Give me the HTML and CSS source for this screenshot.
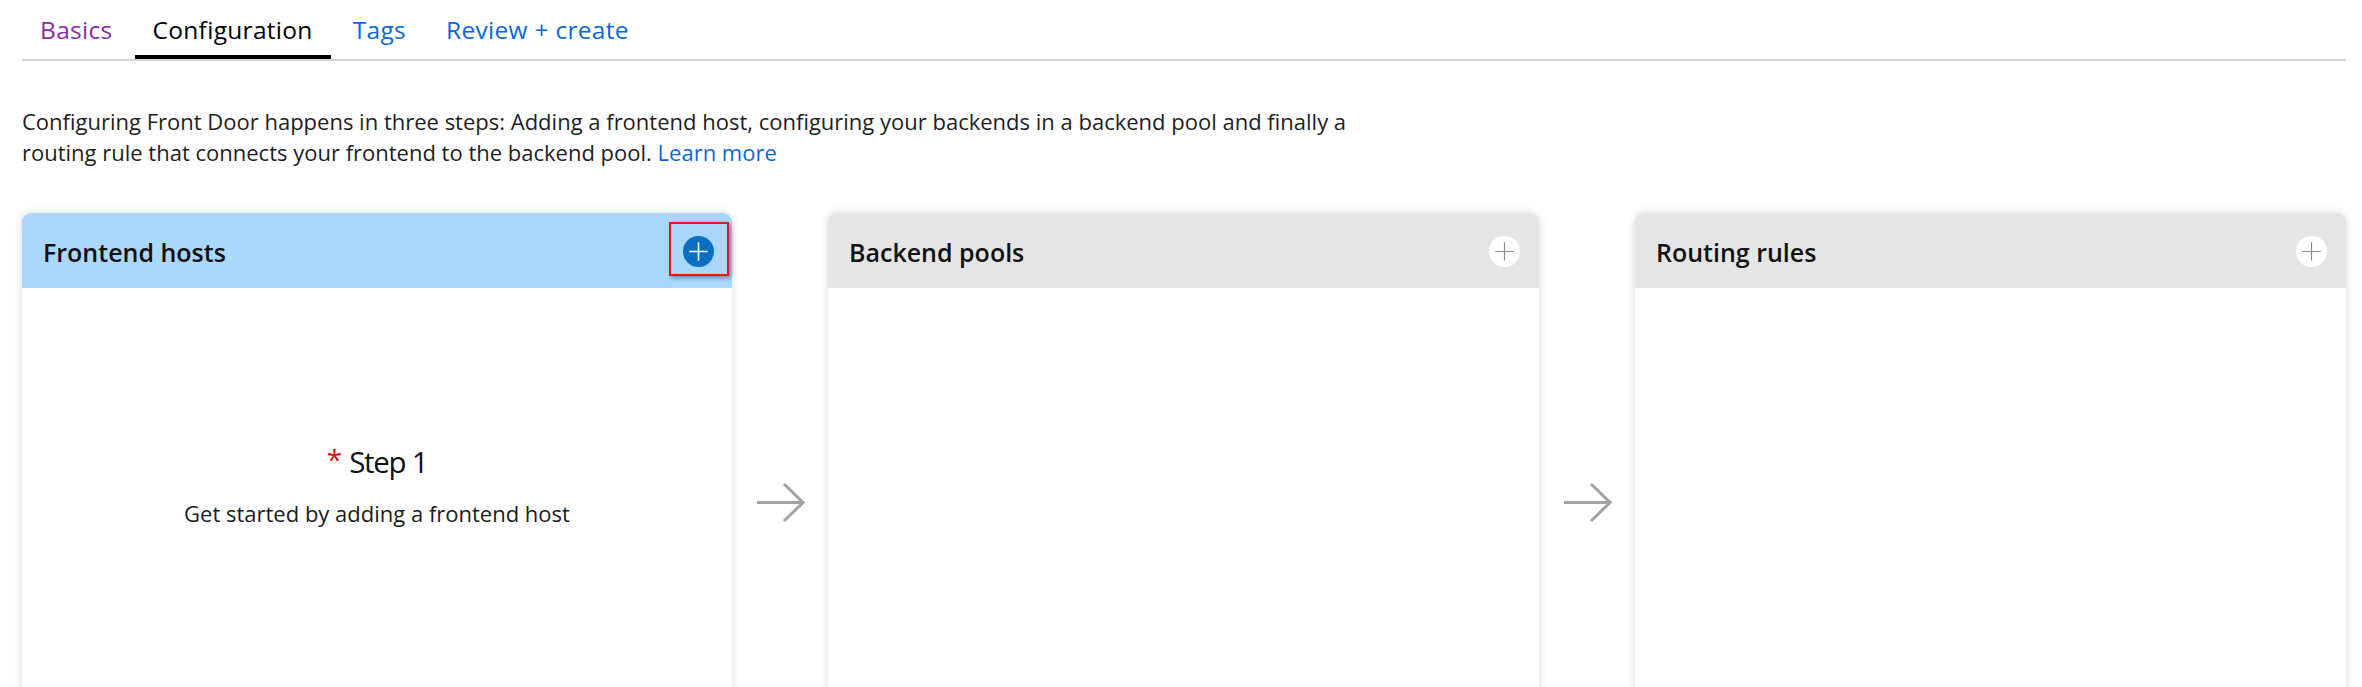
FILE: index.html
```html
<!DOCTYPE html>
<html lang="en">
<head>
<meta charset="utf-8">
<title>Create a Front Door - Configuration</title>
<link rel="stylesheet" href="styles.css">
</head>
<body>
<div class="page">
  <nav class="tabs">
    <a class="tab tab--visited">Basics</a>
    <a class="tab tab--active">Configuration</a>
    <a class="tab tab--link">Tags</a>
    <a class="tab tab--link">Review + create</a>
  </nav>

  <p class="intro">Configuring Front Door happens in three steps: Adding a frontend host, configuring your backends in a backend pool and finally a<br>routing rule that connects your frontend to the backend pool. <a class="intro-link">Learn more</a></p>

  <div class="board">
    <section class="card card--current">
      <header class="card-head">
        <h2 class="card-title">Frontend hosts</h2>
        <button class="add add--primary" aria-label="Add a frontend host">
          <svg viewBox="0 0 32 32" width="31" height="31"><path d="M16 6.5v19M6.5 16h19" stroke="#fff" stroke-width="1.6" fill="none"/></svg>
        </button>
        <span class="highlight"></span>
      </header>
      <div class="card-body">
        <div class="step"><span class="req">*</span>Step 1</div>
        <div class="hint">Get started by adding a frontend host</div>
      </div>
    </section>

    <div class="connector">
      <svg viewBox="0 0 50 40" width="50" height="40"><path d="M2 19.5h47M29 1l19 18.5L29 38" stroke="#a2a2a2" stroke-width="3" fill="none"/></svg>
    </div>

    <section class="card">
      <header class="card-head">
        <h2 class="card-title">Backend pools</h2>
        <button class="add" aria-label="Add a backend pool">
          <svg viewBox="0 0 32 32" width="31" height="31"><path d="M16 6.5v19M6.5 16h19" stroke="#8a8a8a" stroke-width="1.2" fill="none"/></svg>
        </button>
      </header>
      <div class="card-body"></div>
    </section>

    <div class="connector">
      <svg viewBox="0 0 50 40" width="50" height="40"><path d="M2 19.5h47M29 1l19 18.5L29 38" stroke="#a2a2a2" stroke-width="3" fill="none"/></svg>
    </div>

    <section class="card">
      <header class="card-head">
        <h2 class="card-title">Routing rules</h2>
        <button class="add" aria-label="Add a routing rule">
          <svg viewBox="0 0 32 32" width="31" height="31"><path d="M16 6.5v19M6.5 16h19" stroke="#8a8a8a" stroke-width="1.2" fill="none"/></svg>
        </button>
      </header>
      <div class="card-body"></div>
    </section>
  </div>
</div>
</body>
</html>
```

FILE: styles.css
```css
html, body {
  margin: 0;
  padding: 0;
  background: #ffffff;
  overflow: hidden;
}

body {
  font-family: "Open Sans", "Noto Sans", sans-serif;
  color: #1b1b1b;
}

.page {
  padding: 0 16px 0 22px;
}

/* ---------- tabs ---------- */
.tabs {
  display: flex;
  gap: 4px;
  border-bottom: 2px solid #d6d6d6;
}

.tab {
  display: block;
  padding: 4px 18px 0;
  line-height: 51px;
  font-size: 24.5px;
  letter-spacing: 0.3px;
  border-bottom: 4px solid transparent;
  cursor: pointer;
}

.tab--visited { color: #8a2ca6; }
.tab--link { color: #0b68d8; }
.tab--active {
  color: #000000;
  border-bottom-color: #000000;
}

/* ---------- intro ---------- */
.intro {
  margin: 45px 0 0;
  font-size: 22px;
  line-height: 31px;
  color: #1e1e1e;
}

.intro-link {
  color: #0b68d8;
  cursor: pointer;
}

/* ---------- board ---------- */
.board {
  margin-top: 45px;
  display: grid;
  grid-template-columns: 710px 96px 711px 96px 711px;
  align-items: start;
}

.card {
  height: 540px;
  background: #ffffff;
  border-radius: 9px 9px 0 0;
  box-shadow: 0 0 9px rgba(0, 0, 0, 0.16);
  display: flex;
  flex-direction: column;
}

.card-head {
  position: relative;
  height: 75px;
  flex: none;
  display: flex;
  align-items: center;
  justify-content: space-between;
  padding: 2px 19px 0 21px;
  box-sizing: border-box;
  background: #e5e5e5;
  border-radius: 9px 9px 0 0;
}

.card--current .card-head {
  background: #a9d7fd;
  padding-right: 18px;
}

.card-title {
  margin: 0;
  font-size: 25px;
  font-weight: 600;
  line-height: 34px;
  color: #111111;
}

.add {
  width: 31px;
  height: 31px;
  padding: 0;
  border: none;
  border-radius: 50%;
  background: #ffffff;
  display: flex;
  align-items: center;
  justify-content: center;
  cursor: pointer;
}

.add svg { display: block; }

.add--primary {
  background: #0a6fc2;
}

.highlight {
  position: absolute;
  top: 9px;
  right: 3px;
  width: 60px;
  height: 54px;
  box-sizing: border-box;
  border: 2px solid #e8141c;
  box-shadow: 2px 2px 4px rgba(0, 0, 0, 0.35);
  pointer-events: none;
}

.card-body {
  flex: 1;
  display: flex;
  flex-direction: column;
  align-items: center;
  padding-top: 149px;
}

.step {
  font-size: 29.5px;
  letter-spacing: -1.3px;
  line-height: 44px;
  color: #111111;
}

.req {
  color: #e00b0b;
  font-size: 28px;
  letter-spacing: 0;
  margin-right: 7px;
  vertical-align: 3px;
}

.hint {
  margin-top: 14px;
  font-size: 22px;
  line-height: 30px;
  color: #1b1b1b;
}

/* ---------- connectors ---------- */
.connector {
  display: flex;
  justify-content: center;
  padding-top: 270px;
}

.connector svg { display: block; }
```
